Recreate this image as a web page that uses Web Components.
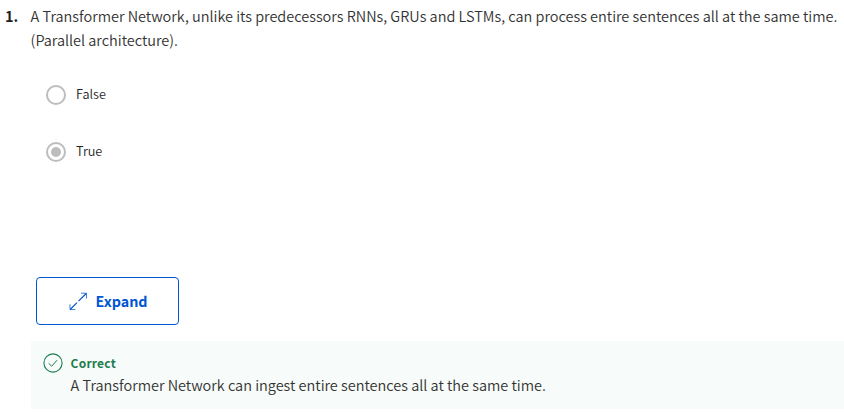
<!DOCTYPE html>
<html lang="en"><head><meta charset="utf-8"><title>Quiz question</title>
<style>
body{margin:0;background:#fff;color:#1f1f1f;font-family:"Source Sans Pro","Noto Sans CJK SC",sans-serif;height:412px;overflow:hidden}
</style></head><body>
<quiz-question number="1.">
<span slot="prompt">A Transformer Network, unlike its predecessors RNNs, GRUs and LSTMs, can process entire sentences all at the same time.<br>(Parallel architecture).</span>
<quiz-option>False</quiz-option>
<quiz-option checked>True</quiz-option>
<expand-button slot="action">Expand</expand-button>
<quiz-feedback slot="feedback" heading="Correct">A Transformer Network can ingest entire sentences all at the same time.</quiz-feedback>
</quiz-question>
<script>
class Base extends HTMLElement{
  connectedCallback(){ if(!this.shadowRoot) this.attachShadow({mode:'open'}).innerHTML=this.render(); }
}
customElements.define('quiz-question',class extends Base{
  render(){return `<style>
  :host{display:block;padding-top:4px}
  .head{display:grid;grid-template-columns:25.6px 1fr;padding-left:5px;line-height:24px;font-size:14.5px}
  .num{font-weight:700}
  .prompt{white-space:nowrap;letter-spacing:-.01px;font-weight:350;color:#333}
  .options{display:flex;flex-direction:column;gap:37px;padding:33px 0 0 46px}
  .action{padding:115px 0 0 36px}
  .feedback{padding:16px 0 0 31px}
  </style><div class="head"><div class="num">${this.getAttribute('number')}</div><div class="prompt"><slot name="prompt"></slot></div></div>
  <div class="options"><slot></slot></div><div class="action"><slot name="action"></slot></div><div class="feedback"><slot name="feedback"></slot></div>`}
});
customElements.define('quiz-option',class extends Base{
  render(){return `<style>
  :host{display:flex;align-items:center;gap:10px;height:20px;font-size:12.7px;line-height:20px;font-weight:350}
  svg{display:block;flex:none}.label{display:block;margin-top:-3px}
  </style><svg width="20" height="20"><circle cx="10" cy="10" r="9" fill="#fff" stroke="#bdbdbd" stroke-width="2"/>${this.hasAttribute('checked')?'<circle cx="10" cy="10" r="5" fill="#bdbdbd"/>':''}</svg><span class="label"><slot></slot></span>`}
});
customElements.define('expand-button',class extends Base{
  render(){return `<style>
  :host{display:block}
  button{display:flex;align-items:center;box-sizing:border-box;width:143px;height:48px;padding:0 0 0 31.5px;gap:8px;border:1px solid #0056d2;border-radius:4px;background:#fff;color:#0056d2;font:700 14.3px/24px "Source Sans Pro","Noto Sans CJK SC",sans-serif}
  svg{display:block;flex:none}
  </style><button><svg width="19" height="19" fill="none" stroke="#0056d2"><path d="M1.2 17.5L8 10.7M9.5 9.2L17.2 1.5" stroke-width="1.2"/><path d="M12 1.2H17.5V6.5M1 12.3V17.6H6.4" stroke-opacity=".75"/></svg><span class="t"><slot></slot></span></button>`}
});
customElements.define('quiz-feedback',class extends Base{
  render(){return `<style>
  :host{display:grid;grid-template-columns:20px 1fr;column-gap:7.6px;box-sizing:border-box;height:68px;padding:12px 0 0 12px;background:#f7fbf9}
  svg{display:block}
  .h{font-size:12px;font-weight:700;letter-spacing:.2px;line-height:20px;color:#1d7c50}
  .b{font-size:14.5px;line-height:24px;font-weight:350;letter-spacing:-.01px;color:#333;white-space:nowrap}
  </style><svg width="20" height="20" fill="none" stroke="#1d7c50"><circle cx="10" cy="10" r="9.1" stroke-width="1.1"/><path d="M5.7 10.3L8.7 13.2L14.1 7.2"/></svg><div><div class="h">${this.getAttribute('heading')}</div><div class="b"><slot></slot></div></div>`}
});
</script></body></html>
